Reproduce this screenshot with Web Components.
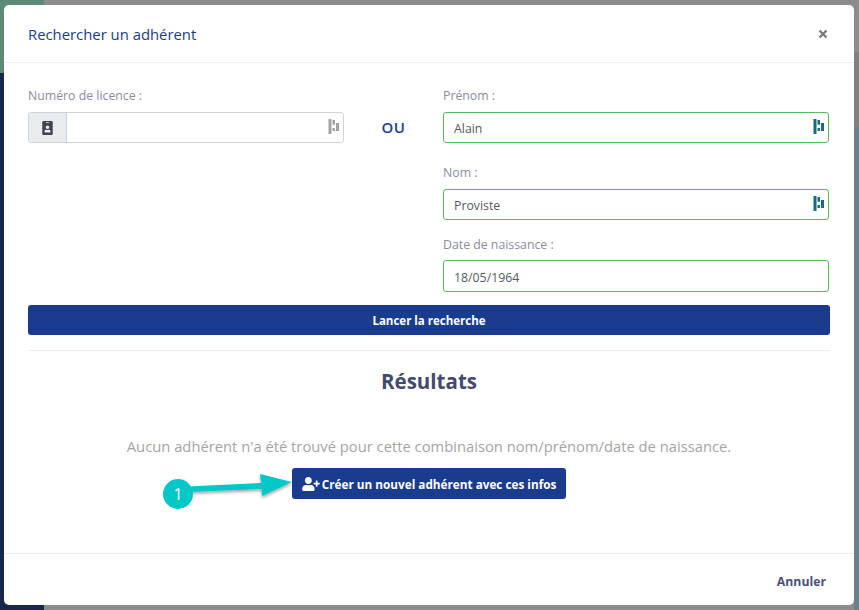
<!DOCTYPE html>
<html lang="fr">
<head>
<meta charset="utf-8">
<title>Rechercher un adhérent</title>
<style>
    html, body { margin: 0; height: 100%; }
    body { font-family: "Open Sans", "Liberation Sans", sans-serif; overflow: hidden; }
</style>
</head>
<body>
<fiche-fond>
    <fiche-modal>
        <span slot="titre">Rechercher un adhérent</span>

        <fiche-recherche></fiche-recherche>
        <bouton-plein large>Lancer la recherche</bouton-plein>
        <fiche-resultats></fiche-resultats>

        <span slot="pied">Annuler</span>
    </fiche-modal>
</fiche-fond>

<script>
const ICONE_BARRES = `
    <svg class="barres" width="11" height="15" viewBox="0 0 11 15" aria-hidden="true">
        <rect x="0.5" y="0" width="3" height="15"/>
        <rect x="4.5" y="1" width="2.5" height="4.7"/>
        <rect x="4.5" y="9" width="2.5" height="3"/>
        <rect x="8" y="4" width="3" height="8"/>
    </svg>`;

// Fond de la page derriere la modale
class ficheFond extends HTMLElement{
    constructor(){
        super();
        this.attachShadow({mode: 'open'});
        this.shadowRoot.innerHTML = `
            <style>
                :host {
                    display: flex;
                    justify-content: center;
                    align-items: flex-start;
                    width: 859px;
                    height: 610px;
                    padding-top: 5px;
                    box-sizing: border-box;
                    position: relative;
                    background: #8c8c8c;
                    overflow: hidden;
                }
                .vert, .marine, .droite, .droite2 { position: absolute; }
                .vert { left: 0; top: 0; width: 44px; height: 73px; background: #5c8a76; }
                .marine { left: 0; top: 73px; width: 44px; height: 537px; background: #16284f; }
                .droite { right: 0; top: 52px; width: 5px; height: 75px; background: #808080; }
                .droite2 { right: 0; top: 127px; width: 5px; height: 483px; background: #6f7f88; }
                ::slotted(*) { position: relative; }
            </style>
            <div class="vert"></div>
            <div class="marine"></div>
            <div class="droite"></div>
            <div class="droite2"></div>
            <slot></slot>
        `;
    }
}
customElements.define('fiche-fond', ficheFond);

class ficheModal extends HTMLElement{
    constructor(){
        super();
        this.attachShadow({mode: 'open'});
        this.shadowRoot.innerHTML = `
            <style>
                :host {
                    display: flex;
                    flex-direction: column;
                    width: 850px;
                    height: 600px;
                    margin-right: 1px;
                    box-sizing: border-box;
                    background: #fff;
                    border-radius: 5px;
                }
                header {
                    height: 58px;
                    flex: none;
                    box-sizing: border-box;
                    display: flex;
                    align-items: center;
                    justify-content: space-between;
                    padding: 0 26px 0 24px;
                    border-bottom: 1px solid #eeeef7;
                    color: #1a3c8f;
                    font-size: 14.85px;
                    font-weight: 500;
                }
                .fermer { color: #777; }
                main { flex: 1; padding: 25px 24px 0 24px; }
                footer {
                    height: 52px;
                    flex: none;
                    box-sizing: border-box;
                    display: flex;
                    align-items: center;
                    justify-content: flex-end;
                    padding: 3px 28px 0 0;
                    border-top: 1px solid #eeeeee;
                    color: #4a5078;
                    font-size: 12.25px;
                    font-weight: 700;
                }
            </style>
            <header>
                <slot name="titre"></slot>
                <svg class="fermer" width="10" height="10" viewBox="0 0 10 10" aria-hidden="true">
                    <path d="M1.5 1.5l7 7M8.5 1.5l-7 7" stroke="currentColor" stroke-width="2.2" fill="none"/>
                </svg>
            </header>
            <main><slot></slot></main>
            <footer><slot name="pied"></slot></footer>
        `;
    }
}
customElements.define('fiche-modal', ficheModal);

class champTexte extends HTMLElement{
    constructor(){
        super();
        this.attachShadow({mode: 'open'});
        const valeur = this.getAttribute('valeur') || '';
        const ok = this.hasAttribute('ok');
        const barres = this.hasAttribute('barres') ? ICONE_BARRES : '';
        const prefixe = this.hasAttribute('badge') ? `
            <span class="prefixe">
                <svg width="11" height="14" viewBox="0 0 384 512" aria-hidden="true"><path fill="#3e4550" d="M336 0H48C21.5 0 0 21.5 0 48v416c0 26.5 21.5 48 48 48h288c26.5 0 48-21.5 48-48V48c0-26.5-21.5-48-48-48zM144 32h96c8.8 0 16 7.2 16 16s-7.2 16-16 16h-96c-8.8 0-16-7.2-16-16s7.2-16 16-16zm48 128c35.3 0 64 28.7 64 64s-28.7 64-64 64-64-28.7-64-64 28.7-64 64-64zm112 236.8c0 10.6-10 19.2-22.4 19.2H102.4C90 416 80 407.4 80 396.8v-19.2c0-31.8 30.1-57.6 67.2-57.6h5c12.3 5.1 25.7 8 39.8 8s27.6-2.9 39.8-8h5c37.1 0 67.2 25.8 67.2 57.6v19.2z"/></svg>
            </span>` : '';
        this.shadowRoot.innerHTML = `
            <style>
                :host { display: block; }
                label {
                    display: block;
                    color: #8a8d9f;
                    font-size: 12.3px;
                    line-height: 16px;
                    margin-bottom: var(--ecart, 8px);
                }
                .boite {
                    display: flex;
                    align-items: center;
                    height: var(--hauteur, 31px);
                    box-sizing: border-box;
                    border: 1px solid ${ok ? '#5cb85c' : '#ced4da'};
                    border-radius: 3px;
                    background: #fff;
                    color: #55595f;
                    font-size: 12.3px;
                }
                .prefixe {
                    display: flex;
                    align-items: center;
                    justify-content: center;
                    align-self: stretch;
                    width: 38px;
                    box-sizing: border-box;
                    flex: none;
                    background: #e9ecef;
                    border-right: 1px solid #ced4da;
                    border-radius: 3px 0 0 3px;
                }
                .valeur { flex: 1; padding: 2px 0 0 10px; }
                .barres { margin: 0 4px 2px 0; fill: ${ok ? '#1a6a80' : '#a3a3a3'}; }
            </style>
            <label>${this.getAttribute('libelle')}</label>
            <div class="boite">${prefixe}<span class="valeur">${valeur}</span>${barres}</div>
        `;
    }
}
customElements.define('champ-texte', champTexte);

class ficheRecherche extends HTMLElement{
    constructor(){
        super();
        this.attachShadow({mode: 'open'});
        this.shadowRoot.innerHTML = `
            <style>
                :host {
                    display: grid;
                    grid-template-columns: 316px 99px 386px;
                    align-items: start;
                }
                .ou {
                    margin-top: 29px;
                    text-align: center;
                    color: #1a3c8f;
                    font-size: 15px;
                    font-weight: 600;
                    letter-spacing: .5px;
                    line-height: 20px;
                }
                .colonne { display: grid; gap: 22px; }
                .date { --hauteur: 32px; --ecart: 7px; margin-top: -5px; }
            </style>
            <champ-texte libelle="Numéro de licence :" badge barres></champ-texte>
            <div class="ou">OU</div>
            <div class="colonne">
                <champ-texte libelle="Prénom :" valeur="Alain" ok barres></champ-texte>
                <champ-texte libelle="Nom :" valeur="Proviste" ok barres></champ-texte>
                <champ-texte class="date" libelle="Date de naissance :" valeur="18/05/1964" ok></champ-texte>
            </div>
        `;
    }
}
customElements.define('fiche-recherche', ficheRecherche);

class boutonPlein extends HTMLElement{
    constructor(){
        super();
        this.attachShadow({mode: 'open'});
        this.shadowRoot.innerHTML = `
            <style>
                :host {
                    display: inline-flex;
                    align-items: center;
                    justify-content: center;
                    box-sizing: border-box;
                    gap: 2px;
                    padding: 0 10px;
                    height: 31px;
                    background: #1a3c8f;
                    color: #fff;
                    border-radius: 3px;
                    font-size: 11.75px;
                    font-weight: 700;
                }
                :host([large]) {
                    display: flex;
                    height: 30px;
                    margin-top: 13px;
                    width: 802px;
                    font-size: 11.5px;
                }
            </style>
            <slot></slot>
        `;
    }
}
customElements.define('bouton-plein', boutonPlein);

class ficheResultats extends HTMLElement{
    constructor(){
        super();
        this.attachShadow({mode: 'open'});
        this.shadowRoot.innerHTML = `
            <style>
                :host {
                    display: block;
                    position: relative;
                    width: 802px;
                    margin-top: 15px;
                    padding-top: 15px;
                    border-top: 1px solid #eeeeee;
                    text-align: center;
                }
                h2 {
                    margin: 0;
                    color: #434a6e;
                    font-size: 20.5px;
                    line-height: 30px;
                    font-weight: 700;
                }
                p {
                    margin: 40px 0 12px;
                    color: #a5a5a5;
                    font-size: 14.75px;
                    line-height: 20px;
                }
                svg.icone { width: 18px; height: 14px; fill: #fff; }
                .fleche { position: absolute; left: 130px; top: 125px; overflow: visible; }
                .fleche text { font: 16px "Open Sans", sans-serif; fill: #fff; text-anchor: middle; }
            </style>
            <h2>Résultats</h2>
            <p>Aucun adhérent n'a été trouvé pour cette combinaison nom/prénom/date de naissance.</p>
            <bouton-plein>
                <svg class="icone" viewBox="0 0 640 512" aria-hidden="true"><path d="M624 208h-64v-64c0-8.800-7.200-16-16-16h-32c-8.800 0-16 7.200-16 16v64h-64c-8.800 0-16 7.200-16 16v32c0 8.800 7.200 16 16 16h64v64c0 8.800 7.200 16 16 16h32c8.800 0 16-7.200 16-16v-64h64c8.800 0 16-7.200 16-16v-32c0-8.800-7.200-16-16-16zm-400 48c70.700 0 128-57.300 128-128S294.700 0 224 0 96 57.300 96 128s57.300 128 128 128zm89.600 32h-16.700c-22.200 10.200-46.900 16-72.900 16s-50.600-5.800-72.900-16h-16.700C60.200 288 0 348.200 0 422.400V464c0 26.500 21.500 48 48 48h352c26.500 0 48-21.500 48-48v-41.600c0-74.200-60.200-134.400-134.400-134.400z"/></svg>
                <span>Créer un nouvel adhérent avec ces infos</span>
            </bouton-plein>
            <!-- annotation par dessus : pastille numerotee et fleche -->
            <svg class="fleche" width="140" height="50" viewBox="0 0 140 50" aria-hidden="true">
                <defs>
                    <filter id="ombre" x="-10%" y="-30%" width="120%" height="170%">
                        <feDropShadow dx="0" dy="2" stdDeviation="1.500" flood-color="#000" flood-opacity=".35"/>
                    </filter>
                </defs>
                <path filter="url(#ombre)" fill="#00c8c8" d="M30 10.500L103 7L102 -2L134 6L104 20L103.500 13L30 16Z"/>
                <circle cx="20" cy="18" r="15" fill="#00c8c8"/>
                <text x="20" y="24">1</text>
            </svg>
        `;
    }
}
customElements.define('fiche-resultats', ficheResultats);
</script>
</body>
</html>
